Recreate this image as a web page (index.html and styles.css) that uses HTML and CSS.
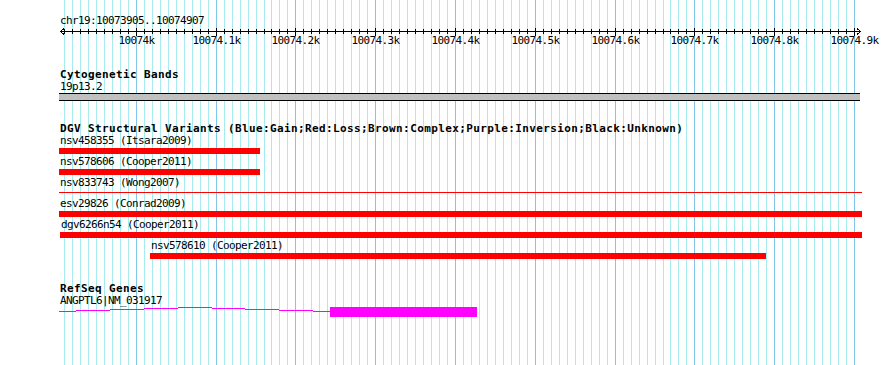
FILE: index.html
```html
<!DOCTYPE html>
<html lang="en">
<head>
  <meta charset="UTF-8" />
  <title>chr19:10073905..10074907</title>
  <link rel="stylesheet" href="styles.css">
</head>
<body>

  <div class="browser">
    <svg class="grid" id="grid" width="890" height="365"></svg>

    <div class="tracks">
      <div class="seg-name">chr19:10073905..10074907</div>
      <svg class="scale" id="scale" width="890" height="20">
        <line class="axis" x1="60" y1="4.5" x2="861" y2="4.5" />
        <path class="axis" d="M64 1.5 L60.5 4.5 L64 7.5" />
        <path class="axis" d="M857 1.5 L860.5 4.5 L857 7.5" />
      </svg>

      <section class="track">
        <h3 class="track-title">Cytogenetic Bands</h3>
        <div class="feat-label">19p13.2</div>
        <div class="band"></div>
      </section>

      <section class="track">
        <h3 class="track-title">DGV Structural Variants (Blue:Gain;Red:Loss;Brown:Complex;Purple:Inversion;Black:Unknown)</h3>
        <div class="sv" style="margin-left:59px;width:201px">
          <div class="feat-label">nsv458355 (Itsara2009)</div>
          <div class="sv-bar"></div>
        </div>
        <div class="sv" style="margin-left:59px;width:201px">
          <div class="feat-label">nsv578606 (Cooper2011)</div>
          <div class="sv-bar"></div>
        </div>
        <div class="sv" style="margin-left:59px;width:803px">
          <div class="feat-label">nsv833743 (Wong2007)</div>
          <div class="sv-bar sv-thin"></div>
        </div>
        <div class="sv" style="margin-left:59px;width:803px">
          <div class="feat-label">esv29826 (Conrad2009)</div>
          <div class="sv-bar"></div>
        </div>
        <div class="sv" style="margin-left:60px;width:802px">
          <div class="feat-label">dgv6266n54 (Cooper2011)</div>
          <div class="sv-bar"></div>
        </div>
        <div class="sv" style="margin-left:150px;width:616px">
          <div class="feat-label">nsv578610 (Cooper2011)</div>
          <div class="sv-bar"></div>
        </div>
      </section>

      <section class="track">
        <h3 class="track-title">RefSeq Genes</h3>
        <div class="feat-label">ANGPTL6|NM_031917</div>
        <svg class="gene" width="890" height="10">
          <!-- intron hat, stepped like the server render -->
          <path class="intron" d="M59 4.5H76M76 3.5H110M110 2.5H144M144 1.5H178M178 0.5H212M212 1.5H245M245 2.5H279M279 3.5H313M313 4.5H330" />
          <rect class="cds" x="330" y="0" width="147" height="10" />
        </svg>
      </section>
    </div>
  </div>

  <script>
    const NS = "http://www.w3.org/2000/svg";
    const grid = document.getElementById("grid");
    const scale = document.getElementById("scale");

    function add(parent, tag, attrs) {
      const el = document.createElementNS(NS, tag);
      for (const k in attrs) el.setAttribute(k, attrs[k]);
      parent.appendChild(el);
      return el;
    }

    // one line per 10bp, a darker one every 100bp
    for (let k = 0; k < 100; k++) {
      const x = Math.round(64 + k * 7.98) + 0.5;
      const major = k % 10 === 9;
      add(grid, "line", { x1: x, y1: 0, x2: x, y2: 365, class: major ? "major" : "minor" });
      add(scale, "line", { x1: x, y1: major ? 1 : 2, x2: x, y2: major ? 9 : 7, class: "axis" });
      if (major) {
        const n = (k - 9) / 10;
        const t = add(scale, "text", { x: x, y: 17, class: "tick-label" });
        t.textContent = n === 0 ? "10074k" : "10074." + n + "k";
      }
    }
  </script>

</body>
</html>
```

FILE: styles.css
```css
body {
  margin: 0;
  background: #fff;
}
.browser {
  position: relative;
  width: 890px;
  height: 365px;
  overflow: hidden;
  font-family: "DejaVu Sans Mono", "Liberation Mono", monospace;
  font-size: 11px;
  letter-spacing: -0.62px;
  color: #000;
}
.grid {
  position: absolute;
  top: 0;
  left: 0;
}
.grid .minor {
  stroke: #a6ecee;
}
.grid .major {
  stroke: #80c6ea;
}
.tracks {
  position: relative;
}
.seg-name {
  padding: 15px 0 0 60px;
  line-height: 12px;
}
.scale,
.gene {
  display: block;
}
.axis {
  stroke: #000;
  fill: none;
  shape-rendering: crispEdges;
}
.tick-label {
  font-family: "DejaVu Sans Mono", "Liberation Mono", monospace;
  font-size: 11px;
  letter-spacing: -0.62px;
  text-anchor: middle;
  fill: #000;
}
.track {
  margin-top: 21px;
}
.track-title {
  margin: 0;
  padding-left: 60px;
  font-size: 11px;
  font-weight: bold;
  letter-spacing: 0.38px;
  line-height: 13px;
}
.feat-label {
  padding-left: 60px;
  line-height: 12px;
  white-space: nowrap;
}
.band {
  margin-left: 59px;
  width: 801px;
  height: 6px;
  background: #c0c0c0;
  border-top: 1px solid #000;
  border-bottom: 1px solid #000;
}
.sv {
  height: 21px;
}
.sv .feat-label {
  padding-left: 1px;
}
.sv-bar {
  margin-top: 1px;
  height: 6px;
  background: #f00;
}
.sv-bar.sv-thin {
  background: linear-gradient(#f00, #f00) 0 2px / 100% 1px no-repeat;
}
.intron {
  fill: none;
  stroke: #f0f;
  shape-rendering: crispEdges;
}
.cds {
  fill: #f0f;
}
```
